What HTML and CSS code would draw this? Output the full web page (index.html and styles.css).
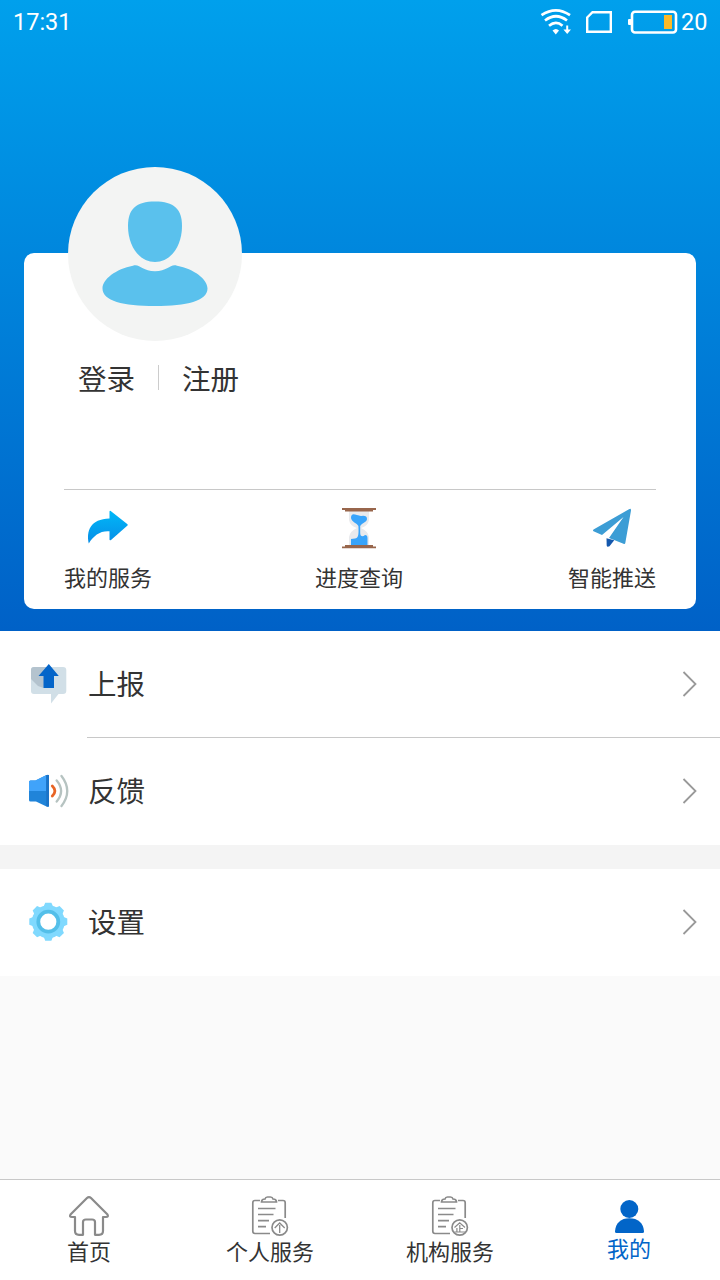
FILE: index.html
```html
<!DOCTYPE html>
<html lang="zh-CN">
<head>
<meta charset="utf-8">
<title>我的</title>
<link rel="stylesheet" href="styles.css">
</head>
<body>
<div class="screen">
  <header class="hero">
    <div class="status">
      <span class="clock">17:31</span>
      <svg class="status-icons" viewBox="538 4 142 36" width="142" height="36" fill="none" stroke="#fff">
        <g stroke-width="2.7">
          <path d="M541.5 15.2Q556 5.5 570 15.2"/>
          <path d="M545 20.5Q556 12 567 20.5"/>
          <path d="M549 25.7Q556 20 562.5 25.7"/>
        </g>
        <path d="M552.5 30.5Q556 27.5 559 30.5L555.8 34.5Z" fill="#fff" stroke="none"/>
        <path d="M566.2 25.5h2v4h2.8l-3.8 4.6-3.8-4.6h2.8z" fill="#fff" stroke="none"/>
        <path d="M592.5 12.2H610.8V31.8H587.2V17.5Z" stroke-width="2.4"/>
        <rect x="632" y="11.8" width="44" height="20.7" rx="3" stroke-width="2.6"/>
        <rect x="628" y="19" width="3.5" height="6" rx="1" fill="#fff" stroke="none"/>
        <rect x="664" y="15" width="8" height="14" fill="#fdb927" stroke="none"/>
      </svg>
      <span class="battery">20</span>
    </div>
    <section class="card">
      <div class="avatar">
        <svg viewBox="68 167 174 174" width="174" height="174" fill="#5ac1ed">
          <path d="M155 201.5C174 201.5 182 209 182 226C182 247 170 262 155 262C140 262 128 247 128 226C128 209 136 201.5 155 201.5Z"/>
          <path d="M133 265.7C140 263.5 142 271.3 155 271.3C168 271.3 170 263.5 177 265.7C194 269 207.5 279 207.5 288.5C207.5 301 187 306 155 306C123 306 102.5 301 102.5 288.5C102.5 279 116 269 133 265.7Z"/>
        </svg>
      </div>
      <div class="account"><span>登录</span><i class="separator"></i><span>注册</span></div>
      <div class="shortcuts">
        <div class="shortcut">
          <svg viewBox="86.5 506 44 44" width="44" height="44">
            <defs><linearGradient id="share" x2="0" y2="1"><stop stop-color="#00b8f8"/><stop offset="1" stop-color="#078de6"/></linearGradient></defs>
            <path d="M110 511.7Q110 510.5 111.2 511L128 524.3Q128.5 525 128 525.6L111.500 540Q110 540.8 110 539.5V531.3C101 530.500 94 535.5 89.3 543.5C86.500 531 91 519 110 518.5Z" fill="url(#share)"/>
          </svg>
          <span>我的服务</span>
        </div>
        <div class="shortcut shortcut-progress">
          <svg viewBox="337 506 44 44" width="44" height="44">
            <path d="M349 511H369V520Q368 526 361 528Q368 531 369 537V545H349V537Q350 531 357 528Q350 526 349 520Z" fill="#e9eaed"/>
            <path d="M351 518Q351 513.5 355 514.5L361 516Q367 515 367 519C367 522 362 523 360.2 526V532.5C360 537 363 537 365 535Q367.5 535 367.5 538V545H351V539L355 538.5C358 538 359 536 358.4 526C357 523 351.5 522 351 518Z" fill="#38a4fb"/>
            <path d="M342 508H376V510H373V511.5H345V510H342ZM345 545H373V546.5H376V548.3H342V546.5H345Z" fill="#98664c"/>
          </svg>
          <span>进度查询</span>
        </div>
        <div class="shortcut">
          <svg viewBox="590 506 44 44" width="44" height="44">
            <path d="M593.5 529.5Q592.3 530.7 593.5 531.2L602 535L623.5 517L609 538L623.5 543.8Q625 544.5 625.3 543L631 510.5Q631.2 508 629 509.3Z" fill="#3c9dd5"/>
            <path d="M606.5 538.2L614.2 540.3L609.5 546.3Q607 547.5 606.7 545.5Z" fill="#1558ad"/>
          </svg>
          <span>智能推送</span>
        </div>
      </div>
    </section>
  </header>

  <main class="menu">
    <div class="row row-report">
      <svg viewBox="26 661 44 44" width="44" height="44">
        <path d="M34 667H63Q66.3 667 66.3 670V691Q66.3 694 63 694H58.500L51 703.5V694H34Q31 694 31 691V670Q31 667 34 667Z" fill="#d1dfe7"/>
        <path d="M34 667H48L43.5 688L38 686L31 679V670Q31 667 34 667Z" fill="#b4c3ce"/>
        <path d="M48.8 664L58.8 676H54V688H43.5V676H38.5Z" fill="#0465c9"/>
      </svg>
      <span class="label">上报</span>
      <svg class="chevron" viewBox="0 0 16 28" width="16" height="28"><path d="M1.5 2L13.5 14L1.5 26"/></svg>
    </div>
    <div class="row">
      <svg viewBox="26 769 44 44" width="44" height="44">
        <path d="M29 782Q29 780.5 30.5 780.5H35.5L46 775.2Q49 774 49 776V805.5Q49 807.7 46.5 806.5L36 801.5H30.5Q29 801.5 29 800Z" fill="#2084d9"/>
        <path d="M29 782Q29 780.5 30.5 780.5H35.5L46 775.2V791H29Z" fill="#40a3fa"/>
        <path d="M46.3 775V806.3L49 806.5V775Z" fill="#1b73c7"/>
        <g fill="none" stroke-linecap="round" stroke-width="2.3">
          <path d="M52.3 786Q57.5 791 52.3 796" stroke="#e86425" stroke-width="2.8"/>
          <path d="M56.7 780.5Q65.5 791 56.7 801.5M61.5 776Q73 791 61.5 806" stroke="#b6c3c1"/>
        </g>
      </svg>
      <span class="label">反馈</span>
      <svg class="chevron" viewBox="0 0 16 28" width="16" height="28"><path d="M1.5 2L13.5 14L1.5 26"/></svg>
    </div>
    <div class="row row-settings">
      <svg viewBox="26 900.5 44 44" width="44" height="44">
        <g fill="#80d9fe">
          <circle cx="48.3" cy="922.2" r="16.5"/>
          <path id="teeth" d="M43.2 908L45.2 903.2H51.4L53.4 908V936L51.4 941.2H45.2L43.2 936Z"/>
          <use href="#teeth" transform="rotate(45 48.3 922.2)"/>
          <use href="#teeth" transform="rotate(90 48.3 922.2)"/>
          <use href="#teeth" transform="rotate(135 48.3 922.2)"/>
        </g>
        <circle cx="48.3" cy="922.2" r="10" fill="#fff" stroke="#54bfe9" stroke-width="3.8"/>
      </svg>
      <span class="label">设置</span>
      <svg class="chevron" viewBox="0 0 16 28" width="16" height="28"><path d="M1.5 2L13.5 14L1.5 26"/></svg>
    </div>
  </main>

  <nav class="tabs">
    <div class="tab tab-home">
      <svg viewBox="67 1194 44 44" width="44" height="44" fill="none" stroke="#8a8a8a" stroke-width="2.2" stroke-linejoin="round">
        <path d="M87 1198Q89 1196 91 1198L107.5 1214.5Q108.8 1217 106 1217H103V1231Q103 1234.8 99 1234.8H95V1222Q95 1219.5 92 1219.5H86Q83 1219.5 83 1222V1234.8H79Q75 1234.8 75 1231V1217H72Q69 1217 70.5 1214.5Z"/>
      </svg>
      <span>首页</span>
    </div>
    <div class="tab">
      <svg viewBox="248 1194 44 44" width="44" height="44" fill="none" stroke="#8a8a8a" stroke-width="1.7">
        <path d="M260 1200.5H255Q252.8 1200.5 252.8 1202.7V1231.3Q252.8 1233.5 255 1233.5H270M278 1200.5H283Q285.2 1200.5 285.2 1202.7V1218M261.5 1202Q261.5 1199 265 1199Q265.5 1197 267.5 1197H270.5Q272.5 1197 273 1199Q276.5 1199 276.5 1202H261.5Z"/>
        <path d="M258 1208.5H275.5M258 1214.5H273.5M258 1220.7H269M258 1226.7H266"/>
        <circle cx="279.7" cy="1227.5" r="7.7"/>
        <path d="M274.7 1228L279.7 1223L284.7 1228M279.7 1225V1233" stroke-width="1.3"/>
      </svg>
      <span>个人服务</span>
    </div>
    <div class="tab">
      <svg viewBox="428 1194 44 44" width="44" height="44" fill="none" stroke="#8a8a8a" stroke-width="1.7">
        <path d="M440 1200.5H435Q432.8 1200.5 432.8 1202.7V1231.3Q432.8 1233.5 435 1233.5H450M458 1200.5H463Q465.2 1200.5 465.2 1202.7V1218M441.5 1202Q441.5 1199 445 1199Q445.5 1197 447.5 1197H450.5Q452.5 1197 453 1199Q456.5 1199 456.5 1202H441.5Z"/>
        <path d="M438 1208.5H455.5M438 1214.5H453.5M438 1220.7H449M438 1226.7H446"/>
        <circle cx="459.7" cy="1227.5" r="7.7"/>
        <path d="M454.5 1227.5L459.7 1222.7L465 1227.5M459.8 1225V1232M456.9 1228V1232M459.8 1228.5H463M454.5 1232H465" stroke-width="1.2"/>
      </svg>
      <span>机构服务</span>
    </div>
    <div class="tab tab-active">
      <svg viewBox="607 1194 44 44" width="44" height="44" fill="#0265c8">
        <circle cx="629.3" cy="1209" r="9"/>
        <path d="M616.5 1233Q615 1233 615 1231.5C615.5 1223 621 1218.3 629.3 1218.3C638 1218.3 643.5 1223 644 1231.5Q644 1233 642.5 1233Z"/>
      </svg>
      <span>我的</span>
    </div>
  </nav>
</div>
</body>
</html>
```
FILE: styles.css
```css
* { box-sizing: border-box; }
body {
  margin: 0;
  font-family: "Noto Sans CJK SC", sans-serif;
  color: #333;
}
svg { display: block; flex: none; }
.screen {
  width: 720px;
  height: 1280px;
  display: flex;
  flex-direction: column;
  background: #fafafa;
  overflow: hidden;
}
.hero {
  height: 631px;
  flex: none;
  padding: 0 24px 22px;
  background: linear-gradient(#00a0ec, #0061c7);
  display: flex;
  flex-direction: column;
  justify-content: space-between;
}
.status {
  height: 44px;
  margin: 0 -12px 0 -11px;
  display: flex;
  align-items: center;
  color: #fff;
  font: 23.5px/44px Roboto, sans-serif;
}
.status-icons { margin-left: auto; }
.battery { width: 27px; margin-left: 1px; }
.card {
  height: 356px;
  background: #fff;
  border-radius: 10px;
  padding: 0 40px;
}
.avatar {
  width: 174px;
  height: 174px;
  margin: -86px 0 0 4px;
  border-radius: 50%;
  background: #f3f4f3;
}
.account {
  display: flex;
  align-items: center;
  height: 73px;
  padding-left: 14px;
  font-size: 28.5px;
}
.separator {
  width: 1px;
  height: 25px;
  background: #ccc;
  margin: 0 23px;
}
.shortcuts {
  margin-top: 75px;
  border-top: 1px solid #c8c8c8;
  padding-top: 16px;
  display: flex;
  justify-content: space-between;
  font-size: 22px;
}
.shortcut {
  display: flex;
  flex-direction: column;
  align-items: center;
  line-height: 32px;
  gap: 10px;
}
.shortcut-progress { margin-right: 2px; }
.menu {
  flex: none;
  display: grid;
  background: #f4f4f4;
}
.row {
  height: 107px;
  background: #fff;
  padding: 0 22px 1px 26px;
  display: flex;
  align-items: center;
}
.row-report {
  padding-bottom: 3px;
  background: linear-gradient(#c8c8c8, #c8c8c8) 87px 100% / 633px 1px no-repeat #fff;
}
.label {
  flex: 1;
  margin-left: 18px;
  padding-bottom: 3px;
  font-size: 28.5px;
  line-height: 40px;
}
.row-report .label { padding-bottom: 1px; }
.row-report .chevron { margin-top: 2px; }
.chevron { fill: none; stroke: #999; stroke-width: 1.8; }
.row-settings { margin-top: 24px; }
.tabs {
  height: 101px;
  margin-top: auto;
  background: #fff;
  border-top: 1px solid #c8c8c8;
  display: grid;
  grid-template-columns: repeat(4, 1fr);
  font-size: 22px;
}
.tab {
  display: flex;
  flex-direction: column;
  align-items: center;
  padding-top: 14px;
  line-height: 28px;
}
.tab-home, .tab-active { padding-right: 2px; }
.tab span { margin-top: -2px; }
.tab-active { color: #0265c8; }
.tab-active span { margin-top: -5px; }
```
